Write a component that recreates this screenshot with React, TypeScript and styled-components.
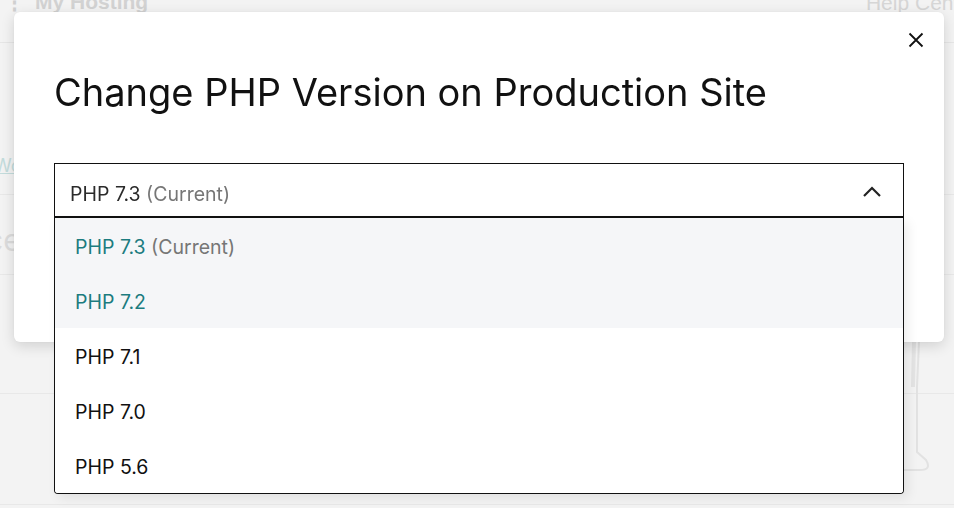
import React from "react";
import styled, { createGlobalStyle } from "styled-components";

const Global = createGlobalStyle`
  html, body { margin: 0; padding: 0; }
  body {
    width: 954px;
    height: 508px;
    overflow: hidden;
    background: #f3f3f3;
    font-family: Inter, "Noto Sans", Arial, sans-serif;
  }
`;

const Page = styled.div`
  position: relative;
  width: 954px;
  height: 508px;
  overflow: hidden;
  background: #f3f3f3;
  display: flex;
  flex-direction: column;
`;

const Header = styled.div`
  height: 42px;
  flex: none;
  display: flex;
  justify-content: space-between;
  align-items: flex-start;
  border-bottom: 1px solid #e6e6e6;
  padding: 0 0 0 4px;
`;

const Brand = styled.div`
  display: flex;
  align-items: flex-start;
  gap: 10px;
  margin-top: -10px;
  font-family: "Liberation Sans", Arial, sans-serif;
  font-weight: 700;
  font-size: 21px;
  color: #d2d2d2;
`;

const Dots = styled.span`
  font-weight: 700;
  color: #d0d0d0;
`;

const HelpLink = styled.div`
  margin-top: -9px;
  margin-right: -24px;
  font-family: "Liberation Sans", Arial, sans-serif;
  font-size: 21px;
  color: #d6d6d6;
`;

const Section = styled.div<{ h: number }>`
  height: ${(p) => p.h}px;
  flex: none;
  border-bottom: 1px solid #e8e8e8;
  display: flex;
  align-items: flex-end;
  overflow: hidden;
`;

const FadedLink = styled.span`
  margin-left: -6px;
  margin-bottom: 18px;
  font-size: 18px;
  color: #c3dcdc;
  text-decoration: underline;
`;

const FadedHeading = styled.span`
  margin-left: -14px;
  margin-bottom: 16px;
  font-size: 30px;
  color: #dcdcdc;
`;

const Illustration = styled.svg`
  position: absolute;
  right: 24px;
  top: 342px;
`;

const Modal = styled.div`
  position: fixed;
  left: 14px;
  top: 12px;
  width: 930px;
  height: 330px;
  box-sizing: border-box;
  background: #fff;
  border-radius: 6px;
  box-shadow: 0 4px 14px rgba(0, 0, 0, 0.14), 0 0 2px rgba(0, 0, 0, 0.06);
  padding: 61px 40px 0 40px;
  display: flex;
  flex-direction: column;
`;

const CloseButton = styled.button`
  position: absolute;
  top: 8px;
  right: 8px;
  width: 40px;
  height: 40px;
  display: flex;
  align-items: center;
  justify-content: center;
  border: none;
  background: transparent;
  padding: 0;
  cursor: pointer;
`;

const Title = styled.h1`
  margin: 0;
  font-weight: 400;
  font-size: 38px;
  line-height: 38px;
  color: #111111;
`;

const SelectWrap = styled.div`
  position: relative;
  margin-top: 52px;
  width: 850px;
`;

const SelectBox = styled.div`
  box-sizing: border-box;
  height: 55px;
  border: 1px solid #111;
  border-bottom-width: 2px;
  display: flex;
  align-items: center;
  justify-content: space-between;
  padding: 7px 22px 0 15px;
  font-size: 19.5px;
  color: #2b2b2b;
`;

const Chevron = styled.svg`
  margin-top: -4px;
`;

const Muted = styled.span`
  color: #767676;
`;

const Menu = styled.ul`
  position: absolute;
  left: 0;
  right: 0;
  top: 55px;
  margin: 0;
  padding: 0;
  list-style: none;
  background: #fff;
  border: 1px solid #111;
  border-top: none;
  border-radius: 0 0 4px 4px;
  box-shadow: 4px 4px 12px rgba(0, 0, 0, 0.08);
  overflow: hidden;
`;

const Option = styled.li<{ highlighted?: boolean }>`
  height: 55px;
  box-sizing: border-box;
  display: flex;
  align-items: center;
  padding: 3px 0 0 20px;
  font-size: 19.5px;
  background: ${(p) => (p.highlighted ? "#f5f6f8" : "#ffffff")};
  color: ${(p) => (p.highlighted ? "#1c7c7f" : "#111111")};
`;

const options = [
  { label: "PHP 7.3", note: "(Current)", hl: true },
  { label: "PHP 7.2", hl: true },
  { label: "PHP 7.1" },
  { label: "PHP 7.0" },
  { label: "PHP 5.6" },
];

export default function App() {
  return (
    <>
      <Global />
      <Page>
        <Header>
          <Brand>
            <Dots>⋮</Dots>
            <span>My Hosting</span>
          </Brand>
          <HelpLink>Help Center</HelpLink>
        </Header>
        <Section h={151}>
          <FadedLink>Wo</FadedLink>
        </Section>
        <Section h={79}>
          <FadedHeading>ce</FadedHeading>
        </Section>
        <Section h={118} />
        <Section h={110} />
        <Illustration width="30" height="135" viewBox="0 0 30 135" fill="none">
          <path d="M14 0 L13 45" stroke="#e4e4e4" strokeWidth="4" />
          <path d="M19 0 L17 45 L17 110 L26 118 Q32 128 20 128 L2 128" stroke="#e2e2e2" strokeWidth="2" />
        </Illustration>
      </Page>
      <Modal>
        <CloseButton aria-label="Close">
          <svg width="16" height="16" viewBox="0 0 16 16">
            <path d="M1.5 1.5 L14.5 14.5 M14.5 1.5 L1.5 14.5" stroke="#111" strokeWidth="1.8" />
          </svg>
        </CloseButton>
        <Title>Change PHP Version on Production Site</Title>
        <SelectWrap>
          <SelectBox>
            <span>
              PHP 7.3 <Muted>(Current)</Muted>
            </span>
            <Chevron width="18" height="11" viewBox="0 0 18 11">
              <path d="M1 10 L9 2 L17 10" stroke="#222" strokeWidth="2.2" fill="none" />
            </Chevron>
          </SelectBox>
          <Menu>
            {options.map((o) => (
              <Option key={o.label} highlighted={o.hl}>
                {o.label}
                {o.note && (
                  <>
                    &nbsp;<Muted>{o.note}</Muted>
                  </>
                )}
              </Option>
            ))}
          </Menu>
        </SelectWrap>
      </Modal>
    </>
  );
}
